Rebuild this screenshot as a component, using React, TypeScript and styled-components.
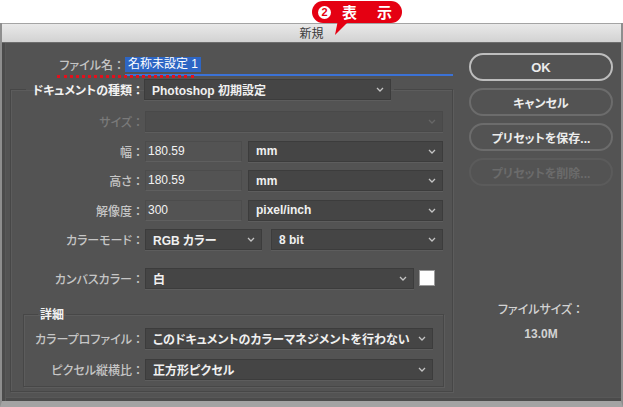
import styled, { createGlobalStyle } from "styled-components";

const GlobalStyle = createGlobalStyle`
  * { box-sizing: border-box; }
  html, body { margin: 0; padding: 0; background: #ffffff; }
  body {
    font-family: "Liberation Sans", "Noto Sans CJK JP", sans-serif;
    font-size: 12px;
    font-feature-settings: "palt";
  }
`;

const Page = styled.div`
  position: relative;
  width: 623px;
  height: 407px;
  overflow: hidden;
`;

const TopSpace = styled.div`
  height: 23px;
  background: #ffffff;
`;

const Callout = styled.div`
  position: absolute;
  left: 312px;
  top: 1px;
  z-index: 2;
  width: 90px;
  height: 22px;
  border-radius: 11px;
  background: #e50012;
  display: flex;
  align-items: center;
  padding-left: 6px;
  color: #ffffff;
  font-family: "Noto Sans CJK JP", sans-serif;
  font-weight: 700;
  font-size: 15px;
`;

const Tail = styled.svg`
  position: absolute;
  left: 20px;
  top: 19px;
`;

const Num = styled.span`
  width: 13px;
  height: 13px;
  border-radius: 50%;
  background: #ffffff;
  color: #e50012;
  font-family: "Liberation Sans", sans-serif;
  font-size: 11px;
  font-weight: 700;
  line-height: 13px;
  text-align: center;
  margin-right: 11px;
`;

const CalloutChar = styled.span<{ $gap?: number }>`
  margin-right: ${(p) => p.$gap ?? 0}px;
  line-height: 22px;
`;

const Window = styled.div`
  width: 623px;
  border-left: 2px solid #8e8e8e;
  border-right: 2px solid #8e8e8e;
  border-bottom: 6px solid #a3a3a3;
`;

const TitleBar = styled.div`
  height: 20px;
  border-top: 1px solid #a4a4a4;
  border-bottom: 1px solid #6d6d6d;
  background: linear-gradient(#e9e9e9, #d2d2d2);
  color: #3a3a3a;
  font-family: "Noto Sans CJK JP", sans-serif;
  font-size: 12px;
  line-height: 18px;
  text-align: center;
`;

const Body = styled.div`
  height: 358px;
  background: #535353;
  display: flex;
  box-shadow: inset 3px 0 0 #4b4b4b, inset 4px 0 0 #585858, inset 0 -3px 0 #4b4b4b,
    inset 0 -4px 0 #585858;
`;

const Main = styled.div`
  width: 451px;
  display: flex;
  flex-direction: column;
`;

const NameRow = styled.div`
  position: relative;
  display: flex;
  margin-top: 14px;
  height: 20px;
`;

const NameLabel = styled.div`
  width: 123px;
  text-align: right;
  line-height: 15px;
  color: #c4c4c4;
  font-weight: 500;
  font-family: "Noto Sans CJK JP", sans-serif;
`;

const Colon = styled.span`
  font-feature-settings: normal;
`;

const RedDots = styled.div`
  position: absolute;
  left: 55px;
  top: 18px;
  width: 137px;
  border-top: 3px dotted #e3101c;
`;

const NameField = styled.div`
  flex: 1;
  height: 19px;
  border-bottom: 2px solid #3b72d6;
`;

const Selected = styled.span`
  display: inline-block;
  height: 15px;
  line-height: 15px;
  padding: 0 3px;
  background: #2e66c4;
  color: #ffffff;
`;

const Group = styled.fieldset`
  margin: 1px 0 0 8px;
  padding: 0 0 4px 0;
  border: 1px solid #474747;
  box-shadow: inset 1px 1px 0 #5c5c5c, 1px 1px 0 #5c5c5c;
  min-width: 0;
`;

const TypeLegend = styled.legend`
  display: flex;
  align-items: center;
  margin-left: 15px;
  padding: 0 3px 0 0;
  height: 22px;
`;

const TypeLabel = styled.span`
  width: 118px;
  text-align: right;
  color: #f2f2f2;
  font-weight: 700;
  font-family: "Noto Sans CJK JP", sans-serif;
`;

const Rows = styled.div`
  display: flex;
  flex-direction: column;
  gap: 8.5px;
  margin-top: 11px;
`;

const Row = styled.div<{ $extra?: number }>`
  display: flex;
  align-items: center;
  height: 21px;
  margin-top: ${(p) => p.$extra ?? 0}px;
`;

const Label = styled.span<{ $w: number; $disabled?: boolean }>`
  width: ${(p) => p.$w}px;
  text-align: right;
  color: ${(p) => (p.$disabled ? "#7a7a7a" : "#c6c6c6")};
  font-weight: 500;
  font-family: "Noto Sans CJK JP", sans-serif;
  margin-right: 1px;
`;

const SelectBox = styled.div<{ $w: number; $disabled?: boolean; $ml?: number }>`
  width: ${(p) => p.$w}px;
  height: 21px;
  margin-left: ${(p) => p.$ml ?? 0}px;
  display: flex;
  align-items: center;
  justify-content: space-between;
  padding: 0 6px 0 7px;
  background: ${(p) => (p.$disabled ? "#4d4d4d" : "#454545")};
  border: 1px solid ${(p) => (p.$disabled ? "#494949" : "#3c3c3c")};
  box-shadow: 0 1px 0 #5d5d5d;
  color: #f0f0f0;
  font-weight: 700;
  white-space: nowrap;
`;

const ChevronIcon = styled.svg`
  flex: none;
`;

const NumberInput = styled.div`
  width: 97px;
  height: 21px;
  padding-left: 2px;
  line-height: 19px;
  border: 1px solid #4c4c4c;
  border-bottom-color: #5f5f5f;
  color: #f2f2f2;
`;

const Swatch = styled.div`
  width: 16px;
  height: 16px;
  margin-left: 5px;
  background: #ffffff;
  border: 1px solid #9a9a9a;
`;

const DetailGroup = styled.fieldset`
  margin: 10px 8px 0 12px;
  padding: 0 10px 6px 0;
  border: 1px solid #474747;
  box-shadow: inset 1px 1px 0 #5c5c5c, 1px 1px 0 #5c5c5c;
  min-width: 0;
`;

const DetailLegend = styled.legend`
  margin-left: 14px;
  padding: 0 2px;
  line-height: 14px;
  color: #f2f2f2;
  font-weight: 700;
  font-family: "Noto Sans CJK JP", sans-serif;
`;

const DetailRows = styled.div`
  display: flex;
  flex-direction: column;
  gap: 10px;
  margin-top: 7px;
`;

const Side = styled.div`
  width: 144px;
  margin-left: 16px;
  padding-top: 10px;
  display: flex;
  flex-direction: column;
  gap: 7px;
`;

const Button = styled.div<{ $primary?: boolean; $disabled?: boolean }>`
  height: 28px;
  border-radius: 14px;
  border: 2px solid
    ${(p) => (p.$primary ? "#bdbdbd" : p.$disabled ? "#5b5b5b" : "#6c6c6c")};
  color: ${(p) => (p.$disabled ? "#6b6b6b" : "#ececec")};
  font-weight: 700;
  font-size: ${(p) => (p.$primary ? 13 : 12)}px;
  font-family: "Liberation Sans", "Noto Sans CJK JP", sans-serif;
  display: flex;
  align-items: center;
  justify-content: center;
`;

const FileSize = styled.div`
  margin-top: 110px;
  display: flex;
  flex-direction: column;
  align-items: center;
  gap: 9px;
  color: #d2d2d2;
  line-height: 15px;
  font-weight: 500;
`;

const FileSizeValue = styled.span`
  font-weight: 700;
`;

function Chevron({ dim }: { dim?: boolean }) {
  return (
    <ChevronIcon width="8" height="5" viewBox="0 0 8 5">
      <polyline
        points="1,1 4,4 7,1"
        fill="none"
        stroke={dim ? "#666666" : "#c4c4c4"}
        strokeWidth="1.3"
      />
    </ChevronIcon>
  );
}

function Select(props: { w: number; value?: string; disabled?: boolean; ml?: number }) {
  const { w, value, disabled, ml } = props;
  return (
    <SelectBox $w={w} $disabled={disabled} $ml={ml}>
      <span>{value}</span>
      <Chevron dim={disabled} />
    </SelectBox>
  );
}

function FieldLabel(props: { w: number; text: string; disabled?: boolean }) {
  return (
    <Label $w={props.w} $disabled={props.disabled}>
      {props.text}
      <Colon>：</Colon>
    </Label>
  );
}

export default function App() {
  return (
    <Page>
      <GlobalStyle />
      <Callout>
        <Num>2</Num>
        <CalloutChar $gap={20}>表</CalloutChar>
        <CalloutChar>示</CalloutChar>
        <Tail width="20" height="16" viewBox="0 0 20 16">
          <polygon points="6,0 18,0 3,15" fill="#e50012" />
        </Tail>
      </Callout>
      <TopSpace />
      <Window>
        <TitleBar>新規</TitleBar>
        <Body>
          <Main>
            <NameRow>
              <NameLabel>
                ファイル名<Colon>：</Colon>
              </NameLabel>
              <RedDots />
              <NameField>
                <Selected>名称未設定 1</Selected>
              </NameField>
            </NameRow>
            <Group>
              <TypeLegend>
                <TypeLabel>
                  ドキュメントの種類<Colon>：</Colon>
                </TypeLabel>
                <Select w={247} ml={0} value="Photoshop 初期設定" />
              </TypeLegend>
              <Rows>
                <Row>
                  <FieldLabel w={133} text="サイズ" disabled />
                  <Select w={298} disabled />
                </Row>
                <Row>
                  <FieldLabel w={133} text="幅" />
                  <NumberInput>180.59</NumberInput>
                  <Select w={195} ml={6} value="mm" />
                </Row>
                <Row>
                  <FieldLabel w={133} text="高さ" />
                  <NumberInput>180.59</NumberInput>
                  <Select w={195} ml={6} value="mm" />
                </Row>
                <Row>
                  <FieldLabel w={133} text="解像度" />
                  <NumberInput>300</NumberInput>
                  <Select w={195} ml={6} value="pixel/inch" />
                </Row>
                <Row>
                  <FieldLabel w={133} text="カラーモード" />
                  <Select w={117} value="RGB カラー" />
                  <Select w={172} ml={9} value="8 bit" />
                </Row>
                <Row $extra={9}>
                  <FieldLabel w={133} text="カンバスカラー" />
                  <Select w={269} value="白" />
                  <Swatch />
                </Row>
                <DetailGroup>
                  <DetailLegend>詳細</DetailLegend>
                  <DetailRows>
                    <Row>
                      <FieldLabel w={120} text="カラープロファイル" />
                      <Select w={288} value="このドキュメントのカラーマネジメントを行わない" />
                    </Row>
                    <Row>
                      <FieldLabel w={120} text="ピクセル縦横比" />
                      <Select w={288} value="正方形ピクセル" />
                    </Row>
                  </DetailRows>
                </DetailGroup>
              </Rows>
            </Group>
          </Main>
          <Side>
            <Button $primary>OK</Button>
            <Button>キャンセル</Button>
            <Button>プリセットを保存...</Button>
            <Button $disabled>プリセットを削除...</Button>
            <FileSize>
              <span>
                ファイルサイズ<Colon>：</Colon>
              </span>
              <FileSizeValue>13.0M</FileSizeValue>
            </FileSize>
          </Side>
        </Body>
      </Window>
    </Page>
  );
}
